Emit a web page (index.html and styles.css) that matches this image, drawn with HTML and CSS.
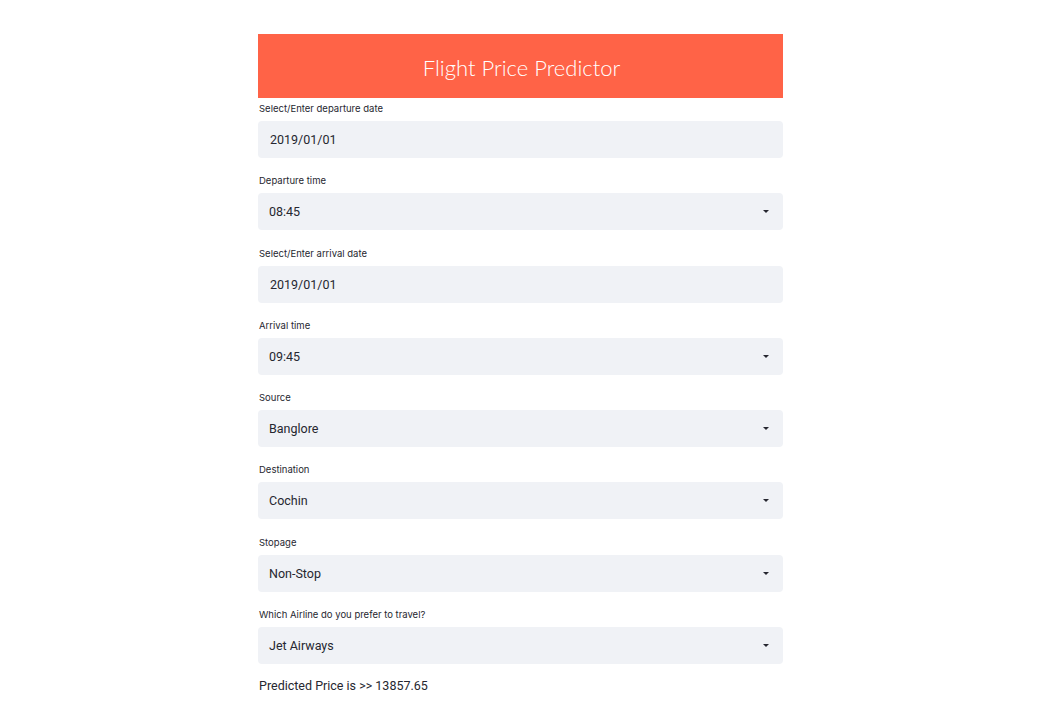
FILE: index.html
```html
<!DOCTYPE html>
<html>
<head>
<meta charset="utf-8">
<link rel="stylesheet" href="styles.css">
</head>
<body>
<main class="app">
  <div class="banner"><h1 class="title">Flight Price Predictor</h1></div>
  <div class="fields">
    <div class="field">
      <label class="label">Select/Enter departure date</label>
      <div class="input date">2019/01/01</div>
    </div>
    <div class="field">
      <label class="label">Departure time</label>
      <div class="input select"><span>08:45</span><svg class="caret" width="6" height="3" viewBox="0 0 6 3"><path d="M0 0h6L3 3z" fill="#262730"/></svg></div>
    </div>
    <div class="field">
      <label class="label">Select/Enter arrival date</label>
      <div class="input date">2019/01/01</div>
    </div>
    <div class="field">
      <label class="label">Arrival time</label>
      <div class="input select"><span>09:45</span><svg class="caret" width="6" height="3" viewBox="0 0 6 3"><path d="M0 0h6L3 3z" fill="#262730"/></svg></div>
    </div>
    <div class="field">
      <label class="label">Source</label>
      <div class="input select"><span>Banglore</span><svg class="caret" width="6" height="3" viewBox="0 0 6 3"><path d="M0 0h6L3 3z" fill="#262730"/></svg></div>
    </div>
    <div class="field">
      <label class="label">Destination</label>
      <div class="input select"><span>Cochin</span><svg class="caret" width="6" height="3" viewBox="0 0 6 3"><path d="M0 0h6L3 3z" fill="#262730"/></svg></div>
    </div>
    <div class="field">
      <label class="label">Stopage</label>
      <div class="input select"><span>Non-Stop</span><svg class="caret" width="6" height="3" viewBox="0 0 6 3"><path d="M0 0h6L3 3z" fill="#262730"/></svg></div>
    </div>
    <div class="field">
      <label class="label">Which Airline do you prefer to travel?</label>
      <div class="input select"><span>Jet Airways</span><svg class="caret" width="6" height="3" viewBox="0 0 6 3"><path d="M0 0h6L3 3z" fill="#262730"/></svg></div>
    </div>
  </div>
  <p class="result">Predicted Price is &gt;&gt; 13857.65</p>
</main>
</body>
</html>
```

FILE: styles.css
```css
html, body {
  margin: 0;
  padding: 0;
  background: #ffffff;
}
body {
  font-family: Inter, "Liberation Sans", sans-serif;
  color: #262730;
}
.app {
  width: 525px;
  margin: 0 auto;
  padding-top: 34px;
  transform: translateX(-7px);
}
.banner {
  background: #ff6347;
  height: 64px;
  display: flex;
  align-items: center;
  justify-content: center;
}
.title {
  margin: 0;
  font-family: Lato, "Open Sans", sans-serif;
  font-weight: 300;
  font-size: 22px;
  color: #ffffff;
  padding-top: 2px;
  padding-left: 2px;
}
.fields {
  display: flex;
  flex-direction: column;
  gap: 15.3px;
  padding-top: 3px;
}
.field {
  display: flex;
  flex-direction: column;
  gap: 6px;
}
.label {
  font-size: 9.5px;
  line-height: 14px;
  color: #262730;
  padding-left: 1px;
  padding-top: 1px;
  margin-bottom: -1px;
}
.input {
  height: 37px;
  background: #f0f2f6;
  border-radius: 4px;
  display: flex;
  align-items: center;
  font-family: Roboto, "Liberation Sans", sans-serif;
  font-size: 12.5px;
  color: #262730;
  box-sizing: border-box;
}
.date {
  padding-left: 12px;
}
.select {
  padding-left: 11px;
  padding-right: 14px;
  justify-content: space-between;
}
.caret {
  display: block;
}
.result {
  margin: 14px 0 0 1px;
  font-family: Roboto, "Liberation Sans", sans-serif;
  font-size: 12.5px;
  line-height: 16px;
  color: #262730;
}
```
